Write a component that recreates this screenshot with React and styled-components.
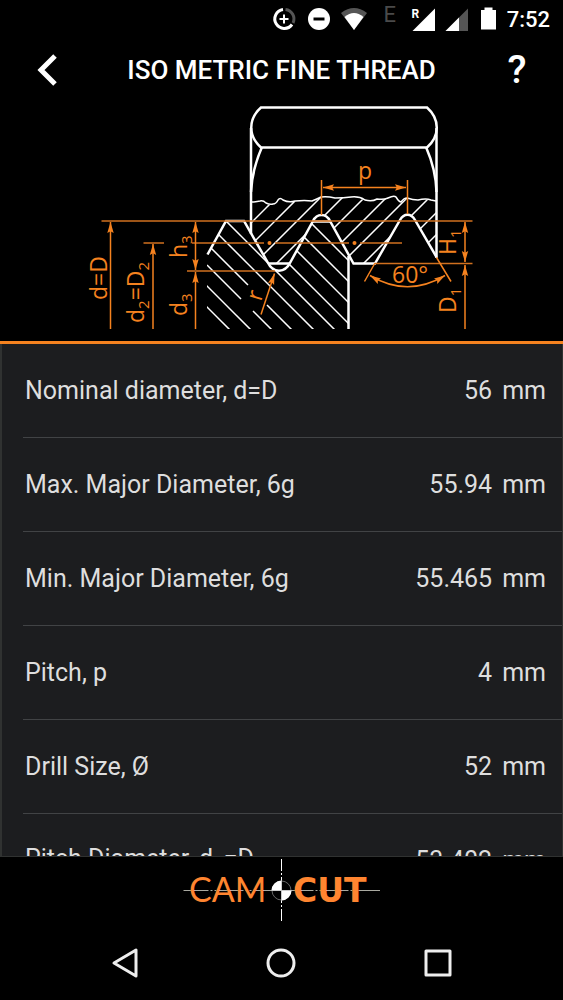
import styled, { createGlobalStyle } from "styled-components";

const ORANGE = "#f5821f";

const GlobalStyle = createGlobalStyle`
  * {
    box-sizing: border-box;
  }

  body {
    margin: 0;
    background: #000;
    color: #fff;
    font-family: Roboto, "Liberation Sans", sans-serif;
  }
`;

const Screen = styled.div`
  display: flex;
  flex-direction: column;
  height: 100vh;
  overflow: hidden;
`;

const StatusBar = styled.div`
  display: flex;
  justify-content: flex-end;
  align-items: center;
  height: 38px;
  padding-right: 13px;
`;

const StatusIcon = styled.svg`
  width: ${({ $wide }) => ($wide ? "35px" : "33px")};
  height: 38px;
  fill: #fff;
`;

const NetworkType = styled.span`
  width: 38px;
  padding: 0 0 10px 2px;
  color: #4a4a4a;
  font-size: 22px;
  text-align: center;
`;

const Clock = styled.time`
  font-size: 22px;
  font-weight: 500;
`;

const Header = styled.header`
  display: flex;
  justify-content: space-between;
  align-items: center;
  height: 62px;
  padding: 2px 22px 0;
`;

const Title = styled.h1`
  margin: 0;
  font-size: 26px;
  font-weight: 500;
  white-space: nowrap;
`;

const HeaderButton = styled.button`
  display: flex;
  justify-content: center;
  align-items: center;
  width: 48px;
  height: 48px;
  padding: 0;
  border: 0;
  background: none;
  color: #fff;
  font-family: inherit;
  font-size: 39px;
  font-weight: 500;
  cursor: pointer;
`;

const Figure = styled.figure`
  display: flex;
  justify-content: center;
  margin: 0;
  padding-bottom: 5px;
  border-bottom: 3px solid ${ORANGE};
`;

const Drawing = styled.svg`
  width: 421px;
  max-width: 100%;
  fill: none;
  stroke: ${ORANGE};
  stroke-width: 1.5;

  text {
    fill: ${ORANGE};
    stroke: none;
    font-family: "Open Sans", "Noto Sans", sans-serif;
    font-size: 23px;
  }
`;

const DataList = styled.dl`
  flex: 1;
  min-height: 0;
  margin: 0;
  padding-left: 21px;
  overflow-y: auto;
  scrollbar-width: none;
  background: #1c1d1f;
  border: solid #303231;
  border-width: 0 1px 1px 2px;
`;

const DataRow = styled.div`
  display: flex;
  justify-content: space-between;
  align-items: center;
  height: 94px;
  padding: 0 16px 0 2px;
  border-bottom: 1px solid #414345;
  color: #dedede;
  font-size: 25px;
`;

const Value = styled.dd`
  display: flex;
  gap: 10px;
  margin: 0;
`;

const Sub = styled.sub`
  font-size: 19px;
`;

const Footer = styled.footer`
  display: flex;
  justify-content: center;
  height: 68px;
`;

const Logo = styled.svg`
  width: 199px;
  height: 68px;
`;

const NavBar = styled.nav`
  display: flex;
  justify-content: space-around;
  align-items: center;
  height: 75px;
  padding: 0 47px;
`;

const NavButton = styled.button`
  width: 48px;
  height: 48px;
  padding: 0;
  border: 0;
  background: none;
  cursor: pointer;

  svg {
    display: block;
    fill: none;
    stroke: #eee;
    stroke-width: 3;
    stroke-linejoin: round;
  }
`;

const rows = [
  { label: "Nominal diameter, d=D", value: "56" },
  { label: "Max. Major Diameter, 6g", value: "55.94" },
  { label: "Min. Major Diameter, 6g", value: "55.465" },
  { label: "Pitch, p", value: "4" },
  { label: "Drill Size, Ø", value: "52" },
  {
    label: (
      <>
        Pitch Diameter, d<Sub>2</Sub>=D<Sub>2</Sub>
      </>
    ),
    value: "53.402",
  },
];

const nutHatch = [474, 496, 518, 540, 562, 584, 605, 627, 649, 671];
const boltHatch = [-88, -67, -46, -25, -5, 16, 79, 100];

const wave =
  "M251 202Q256 202 260 201Q263 200 266 203Q270 205 273 204Q276 204 278 200Q280 197 283 200Q289 203 295 201Q305 200 312 201Q317 199 321 197Q327 196 335 198Q344 198 351 197Q359 196 365 200Q372 202 377 199Q384 200 388 198Q394 195 396 197Q399 202 401 202Q404 198 407 198Q413 200 418 200Q426 198 431 200L436 201";

const Arrow = ({ d, both }) => (
  <path
    d={d}
    markerEnd="url(#arrow)"
    markerStart={both ? "url(#arrow)" : undefined}
  />
);

const VerticalLabel = ({ x, y, children }) => (
  <text transform={`translate(${x} ${y}) rotate(-90)`}>{children}</text>
);

const SubText = ({ children }) => (
  <tspan dy="5" fontSize="15">
    {children}
  </tspan>
);

const ThreadDrawing = () => (
  <Drawing viewBox="71 100 421 236" role="img" aria-label="Thread profile">
    <defs>
      <marker
        id="arrow"
        viewBox="0 0 12 8"
        refX="12"
        refY="4"
        markerWidth="11"
        markerHeight="8"
        markerUnits="userSpaceOnUse"
        orient="auto-start-reverse"
      >
        <path d="M0 0.5L12 4L0 7.5L2 4Z" fill={ORANGE} stroke="none" />
      </marker>
      <clipPath id="nut">
        <path d="M251 202L271 205L279 199L289 202L312 201L322 197L351 197L370 201L394 197L401 202L407 198L436 201V257L416 221Q407 209 399 221L375 263H354L330 221Q321 209 313 221L290 263H268L251 234Z" />
      </clipPath>
      <clipPath id="bolt">
        <path d="M207 254L226 221H244L268 263Q279 279 290 263L313 221H330L349 256V329H207Z" />
      </clipPath>
    </defs>

    <g stroke="#fff" clipPath="url(#nut)">
      {nutHatch.map((c) => (
        <path key={c} d={`M${c - 190} 190L${c - 270} 270`} />
      ))}
    </g>
    <g stroke="#fff" clipPath="url(#bolt)">
      {boltHatch.map((c) => (
        <path key={c} d={`M${210 - c} 210L${330 - c} 330`} />
      ))}
      <path d="M211 248L248 285M267 305L292 330M207 265L241 299M253 311L272 330" />
    </g>

    <g stroke="#fff" strokeWidth="2.5">
      <path d="M261 107.5H427C440 119 440 136 427 147.5H261C248 136 248 119 261 107.5Z" />
      <path d="M251 128V234M436.5 128V258" />
      <path d="M262 147Q252 170 251 192M426 147Q436 170 436.5 192" />
      <path d={wave} strokeWidth="1.5" />
      <path d="M207.5 254.5L226 221H244L267.5 262C273 273.5 285 273.5 290.5 262L313 221C317 213 326 213 330 221L353.5 263.5H375L400 220C404 213 411 213 415 220L436.5 257" />
      <path d="M313 221.5H330M268 263.5H290" />
      <path d="M348.5 256V329" />
    </g>

    <path
      d="M101.5 221H472.5M143.5 243H164M192 243H264M275 243H349M360 243H402M187 271H275M375 263.5H472.5"
      stroke="#d0701f"
    />
    <circle cx="269.5" cy="243" r="2" fill={ORANGE} stroke="none" />
    <circle cx="354.5" cy="243" r="2" fill={ORANGE} stroke="none" />
    <path d="M321.5 180V215M407.5 180V214M375 263L364.5 281.5M436.5 257.5L451 281.5" />

    <Arrow d="M110.5 329V222" />
    <Arrow d="M153 329V244" />
    <Arrow d="M195.5 222V270" both />
    <Arrow d="M195.5 329V272" />
    <Arrow d="M465 222V262" both />
    <Arrow d="M465 329V265" />
    <Arrow d="M323 187.5H406" both />
    <Arrow d="M261 314.5L274.5 273.5" />
    <Arrow d="M370 275.5Q407.5 298 445 275.5" both />

    <VerticalLabel x="106.5" y="300">
      d=D
    </VerticalLabel>
    <VerticalLabel x="143.5" y="323">
      d<SubText>2</SubText>
      <tspan dy="-5">=D</tspan>
      <SubText>2</SubText>
    </VerticalLabel>
    <VerticalLabel x="186.5" y="258">
      h<SubText>3</SubText>
    </VerticalLabel>
    <VerticalLabel x="186.5" y="316">
      d<SubText>3</SubText>
    </VerticalLabel>
    <VerticalLabel x="456" y="255">
      H<SubText>1</SubText>
    </VerticalLabel>
    <VerticalLabel x="456" y="313">
      D<SubText>1</SubText>
    </VerticalLabel>
    <text transform="translate(261 302) rotate(-73)">r</text>
    <text x="358" y="179">
      p
    </text>
    <text x="392" y="283">
      60°
    </text>
  </Drawing>
);

const CamCutLogo = () => (
  <Logo viewBox="182 857 199 68" role="img" aria-label="CAM CUT">
    <path
      d="M183.5 890.5H380"
      stroke="#a9a9a0"
      strokeDasharray="25 2 2 2 2 2"
    />
    <text
      x="189"
      y="902"
      fill="#ff8530"
      fontFamily="Lato, sans-serif"
      fontSize="34"
    >
      CAM
    </text>
    <text
      x="293"
      y="902"
      fill="#ff8530"
      fontFamily="'DejaVu Sans', sans-serif"
      fontWeight="700"
      fontSize="33"
    >
      CUT
    </text>
    <path
      d="M281.5 859V921"
      stroke="#fff"
      strokeDasharray="12 2 2 2 26 2 2 2 12"
    />
    <circle cx="281.5" cy="890.5" r="9.5" fill="#000" stroke="#666" />
    <path
      d="M281.5 890.5V880.5A10 10 0 0 0 271.5 890.5ZM281.5 890.5V900.5A10 10 0 0 0 291.5 890.5Z"
      fill="#fff"
    />
    <path d="M271.5 890.5H291.5M281.5 880V901" stroke="#ccc" />
  </Logo>
);

const StatusIcons = () => (
  <>
    <StatusIcon $wide viewBox="266 0 35 38">
      <g fill="none" strokeWidth="3">
        <path d="M286.5 9.5A9.5 9.5 0 0 1 294 23" stroke="#555" />
        <path d="M284 9.5A9.5 9.5 0 1 0 293 24.5" stroke="#fff" />
        <path d="M285 14.5V23.5M280.5 19H289.5" stroke="#fff" strokeWidth="2" />
      </g>
    </StatusIcon>
    <StatusIcon $wide viewBox="301 0 35 38">
      <circle cx="320" cy="19" r="11" />
      <path d="M314.5 17.5H325.5V20.5H314.5Z" fill="#000" />
    </StatusIcon>
    <StatusIcon $wide viewBox="336 0 35 38">
      <path d="M342 13Q355 3 368 13L355 30Z" fill="#555" />
      <path d="M345.5 17Q355 9 364.5 17L355 30Z" />
    </StatusIcon>
    <NetworkType>E</NetworkType>
    <StatusIcon viewBox="409 0 33 38">
      <path d="M436 8.5V31H413.5Z" />
      <path d="M413 8H422V22H413Z" fill="#000" />
      <text x="412.5" y="18" fontSize="12" fontWeight="700">
        R
      </text>
    </StatusIcon>
    <StatusIcon viewBox="442 0 33 38">
      <path d="M469 8.5V31H446.5Z" fill="#555" />
      <path d="M460 17.5V31H446.5Z" />
    </StatusIcon>
    <StatusIcon viewBox="475 0 33 38">
      <path d="M485.5 7.5H493.5V10H497V29.5H482V10H485.5Z" />
    </StatusIcon>
  </>
);

const App = () => {
  return (
    <Screen>
      <GlobalStyle />
      <StatusBar>
        <StatusIcons />
        <Clock>7:52</Clock>
      </StatusBar>
      <Header>
        <HeaderButton aria-label="Back">
          <svg width="48" height="48" fill="none" stroke="#fff" strokeWidth="5">
            <path d="M33 10L19 24L33 38" />
          </svg>
        </HeaderButton>
        <Title>ISO METRIC FINE THREAD</Title>
        <HeaderButton aria-label="Help">?</HeaderButton>
      </Header>
      <Figure>
        <ThreadDrawing />
      </Figure>
      <DataList>
        {rows.map((row) => (
          <DataRow key={row.value}>
            <dt>{row.label}</dt>
            <Value>
              <span>{row.value}</span>
              <span>mm</span>
            </Value>
          </DataRow>
        ))}
      </DataList>
      <Footer>
        <CamCutLogo />
      </Footer>
      <NavBar>
        <NavButton aria-label="Back">
          <svg width="48" height="48">
            <path d="M13 24L35 11V37Z" />
          </svg>
        </NavButton>
        <NavButton aria-label="Home">
          <svg width="48" height="48">
            <circle cx="24" cy="24" r="13" />
          </svg>
        </NavButton>
        <NavButton aria-label="Recent apps">
          <svg width="48" height="48">
            <path d="M12 12H36V36H12Z" />
          </svg>
        </NavButton>
      </NavBar>
    </Screen>
  );
};

export default App;
